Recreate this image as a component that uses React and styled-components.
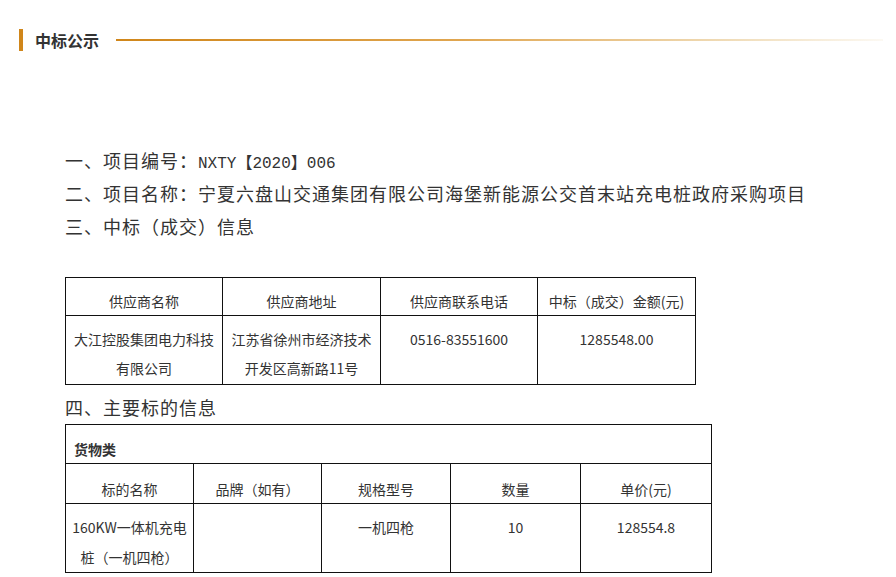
import React from "react";
import styled, { createGlobalStyle } from "styled-components";

const suppliers = [
  {
    name: "大江控股集团电力科技有限公司",
    address: "江苏省徐州市经济技术开发区高新路11号",
    phone: "0516-83551600",
    amount: "1285548.00",
  },
];

const goods = [
  { name: "160KW一体机充电桩（一机四枪）", brand: "", model: "一机四枪", qty: "10", price: "128554.8" },
];

const App = () => {
  return (
    <>
      <GlobalStyle />
      <Page>
        <SectionHeader>
          <Bar />
          <Title>中标公示</Title>
          <Rule />
        </SectionHeader>

        <Content>
          <Line>
            一、项目编号：<Latin>NXTY【2020】006</Latin>
          </Line>
          <Line>二、项目名称：宁夏六盘山交通集团有限公司海堡新能源公交首末站充电桩政府采购项目</Line>
          <Line>三、中标（成交）信息</Line>

          <Table $width={630} $top={34}>
            <colgroup>
              <col width="157" />
              <col width="158" />
              <col width="157" />
              <col width="158" />
            </colgroup>
            <tbody>
              <tr>
                <HeadCell>供应商名称</HeadCell>
                <HeadCell>供应商地址</HeadCell>
                <HeadCell>供应商联系电话</HeadCell>
                <HeadCell>中标（成交）金额(元)</HeadCell>
              </tr>
              {suppliers.map((s, i) => (
                <tr key={i}>
                  <BodyCell>{s.name}</BodyCell>
                  <BodyCell>{s.address}</BodyCell>
                  <BodyCell>{s.phone}</BodyCell>
                  <BodyCell>{s.amount}</BodyCell>
                </tr>
              ))}
            </tbody>
          </Table>

          <Line $gap={6}>四、主要标的信息</Line>

          <Table $width={646} $top={0}>
            <colgroup>
              <col width="128" />
              <col width="128" />
              <col width="129" />
              <col width="130" />
              <col width="131" />
            </colgroup>
            <tbody>
              <tr>
                <GroupCell colSpan={5}>货物类</GroupCell>
              </tr>
              <tr>
                <HeadCell $tall>标的名称</HeadCell>
                <HeadCell $tall>品牌（如有）</HeadCell>
                <HeadCell $tall>规格型号</HeadCell>
                <HeadCell $tall>数量</HeadCell>
                <HeadCell $tall>单价(元)</HeadCell>
              </tr>
              {goods.map((g, i) => (
                <tr key={i}>
                  <BodyCell $wide>{g.name}</BodyCell>
                  <BodyCell $wide>{g.brand}</BodyCell>
                  <BodyCell $wide>{g.model}</BodyCell>
                  <BodyCell $wide>{g.qty}</BodyCell>
                  <BodyCell $wide>{g.price}</BodyCell>
                </tr>
              ))}
            </tbody>
          </Table>
        </Content>
      </Page>
    </>
  );
};

export default App;

const GlobalStyle = createGlobalStyle`
  html, body {
    margin: 0;
    padding: 0;
    background: #fff;
  }
  body {
    font-family: "Noto Sans CJK SC", "Noto Sans", sans-serif;
    color: #333;
  }
`;

const Page = styled.div`
  width: 896px;
  height: 577px;
  overflow: hidden;
  background: #fff;
`;

const SectionHeader = styled.div`
  display: flex;
  align-items: center;
  padding: 29px 13px 0 19px;
  height: 22px;
`;

const Bar = styled.div`
  width: 4px;
  height: 22px;
  background: #d0861a;
`;

const Title = styled.h2`
  margin: 0 0 0 12px;
  font-size: 16px;
  font-weight: 700;
  line-height: 22px;
  color: #333;
`;

const Rule = styled.div`
  flex: 1;
  height: 2px;
  margin: -1px 0 0 17px;
  background: linear-gradient(to right, #d0861a 0%, #e0a650 45%, #f0dcb8 80%, rgba(250, 245, 235, 0.6) 100%);
`;

const Content = styled.div`
  display: flex;
  flex-direction: column;
  align-items: flex-start;
  padding: 93px 0 0 65px;
`;

const Line = styled.p`
  margin: ${(p) => p.$gap || 0}px 0 0;
  height: 33px;
  font-size: 18px;
  letter-spacing: 1px;
  line-height: 33px;
  color: #333;
  white-space: nowrap;
`;

const Latin = styled.span`
  font-family: "Liberation Mono", "Noto Sans CJK SC", monospace;
  font-size: 16px;
  line-height: 1;
  letter-spacing: 0;
`;

const Table = styled.table`
  width: ${(p) => p.$width}px;
  margin-top: ${(p) => p.$top}px;
  border-collapse: collapse;
  table-layout: fixed;
  font-size: 14px;
  color: #333;
`;

const HeadCell = styled.td`
  border: 1px solid #111;
  text-align: center;
  vertical-align: top;
  padding: ${(p) => (p.$tall ? "11px 4px 0" : "9px 4px 0")};
  height: 28px;
  line-height: 28px;
  white-space: nowrap;
`;

const BodyCell = styled.td`
  border: 1px solid #111;
  text-align: center;
  vertical-align: top;
  padding: ${(p) => (p.$wide ? "8px" : "9px")} 6px 0;
  height: 59px;
  line-height: ${(p) => (p.$wide ? "30px" : "29px")};
`;

const GroupCell = styled.td`
  border: 1px solid #111;
  text-align: left;
  vertical-align: top;
  padding: 10px 8px 0;
  height: 28px;
  line-height: 28px;
  font-weight: 700;
`;
